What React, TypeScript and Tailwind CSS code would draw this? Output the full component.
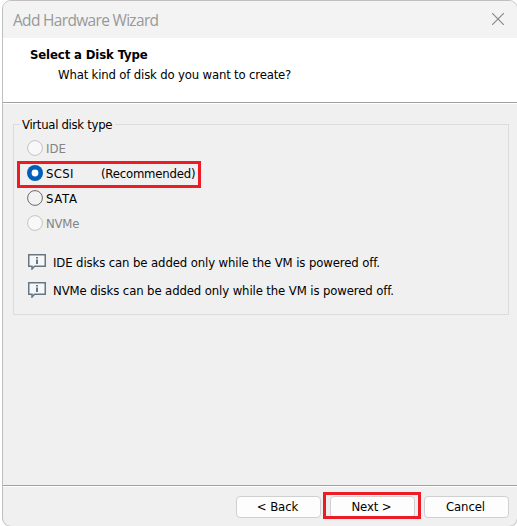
import React from "react";

const ui = "font-['DejaVu_Sans_Condensed','DejaVu_Sans',sans-serif] [font-stretch:condensed]";

type RadioProps = { label: string; note?: string; disabled?: boolean; checked?: boolean; spacing?: string };

function Radio({ label, note, disabled, checked, spacing = "" }: RadioProps) {
  return (
    <label className={`flex h-[25px] items-center ${disabled ? "text-[#838383]" : "text-black"}`}>
      <svg width="16" height="16" viewBox="0 0 16 16" className="mr-[3px] shrink-0">
        {checked ? (
          <>
            <circle cx="8" cy="8" r="8" fill="#005fb8" />
            <circle cx="8" cy="8" r="3.4" fill="#fff" />
          </>
        ) : (
          <circle cx="8" cy="8" r="7.4" fill={disabled ? "#f8f8f8" : "#f2f2f2"} stroke={disabled ? "#c3c3c3" : "#6a6a6a"} />
        )}
      </svg>
      <span className={`pt-[2px] ${note ? "w-[55px]" : ""} ${spacing}`}>{label}</span>
      {note && <span className="pt-[2px] tracking-[-0.2px]">{note}</span>}
    </label>
  );
}

function Info({ children }: { children: React.ReactNode }) {
  return (
    <div className="flex h-7 items-center">
      <svg width="18" height="16" viewBox="0 0 18 16" className="mr-[7px] shrink-0">
        <path d="M0.75 0.75H17.25V12.25H6.5L4 15V12.25H0.75Z" fill="#f5f8fa" stroke="#687681" strokeWidth="1.5" />
        <path d="M8 3h2v1.5H8zM8 5.5h2V10H8z" fill="#687681" />
      </svg>
      <span className="pt-[2px] tracking-[-0.115px]">{children}</span>
    </div>
  );
}

function Button({ children }: { children: React.ReactNode }) {
  return (
    <button className="block h-[22px] w-[85px] rounded-[4px] border border-[#d0d0d0] bg-[#fdfdfd] pr-[2px] text-center leading-[20px] tracking-[-0.1px]">
      {children}
    </button>
  );
}

export default function App() {
  return (
    <main className="h-[526px] w-[517px] overflow-hidden bg-white pl-[2px]">
      <section className={`flex h-[527px] w-[516px] flex-col overflow-hidden rounded-[9px] border border-[#bfbfbf] bg-[#f0f0f0] text-[13px] leading-4 text-black ${ui}`}>
        <header className="flex h-[37px] shrink-0 items-center justify-between bg-[#f3f3f3] pl-[10px] pr-[12px]">
          <h1 className="whitespace-nowrap font-['Open_Sans','Noto_Sans',sans-serif] text-[15.5px] text-[#999] [font-stretch:normal] tracking-[-0.68px]">Add Hardware Wizard</h1>
          <svg width="12" height="12" viewBox="0 0 12 12" className="-mt-px mr-[1px]" stroke="#858585" strokeWidth="1.1">
            <path d="M0 0L12 12M12 0L0 12" />
          </svg>
        </header>
        <div className="h-[66px] shrink-0 border-b border-b-white bg-white">
          <div className="h-[65px] border-b border-[#a0a0a0] pl-[27px] pt-[9px]">
            <h2 className="font-bold tracking-[-0.12px]">Select a Disk Type</h2>
            <p className="mt-1 pl-[28px] tracking-[-0.17px]">What kind of disk do you want to create?</p>
          </div>
        </div>
        <div className="h-[381px] shrink-0 pl-[10px] pt-[20px]">
          <div className="h-[191px] w-[496px] border border-[#dcdcdc]">
            <div className="-mt-[8px] ml-[6px] w-[95px] whitespace-nowrap bg-[#f0f0f0] pl-[2px] tracking-[-0.3px]">Virtual disk type</div>
            <div className="ml-[13px] mt-[2px]">
              <Radio label="IDE" disabled />
              <div className="relative">
                <Radio label="SCSI" note="(Recommended)" checked spacing="tracking-[0.3px]" />
                <div className="absolute -left-[10px] top-px h-[27px] w-[184px] border-[3px] border-[#ed1c24]" />
              </div>
              <Radio label="SATA" spacing="tracking-[0.7px]" />
              <Radio label="NVMe" disabled spacing="tracking-[-0.2px]" />
            </div>
            <div className="ml-[14px] mt-[13px]">
              <Info>IDE disks can be added only while the VM is powered off.</Info>
              <Info>NVMe disks can be added only while the VM is powered off.</Info>
            </div>
          </div>
        </div>
        <footer className="h-[45px] shrink-0 border-t border-[#a0a0a0]">
          <div className="flex gap-[9px] border-t border-white pl-[233px] pt-[9px]">
            <Button>&lt; Back</Button>
            <div className="relative">
              <Button>Next &gt;</Button>
              <div className="absolute -left-[7px] -top-[4px] h-[27px] w-[98px] border-[3px] border-[#ed1c24]" />
            </div>
            <Button>Cancel</Button>
          </div>
        </footer>
      </section>
    </main>
  );
}
